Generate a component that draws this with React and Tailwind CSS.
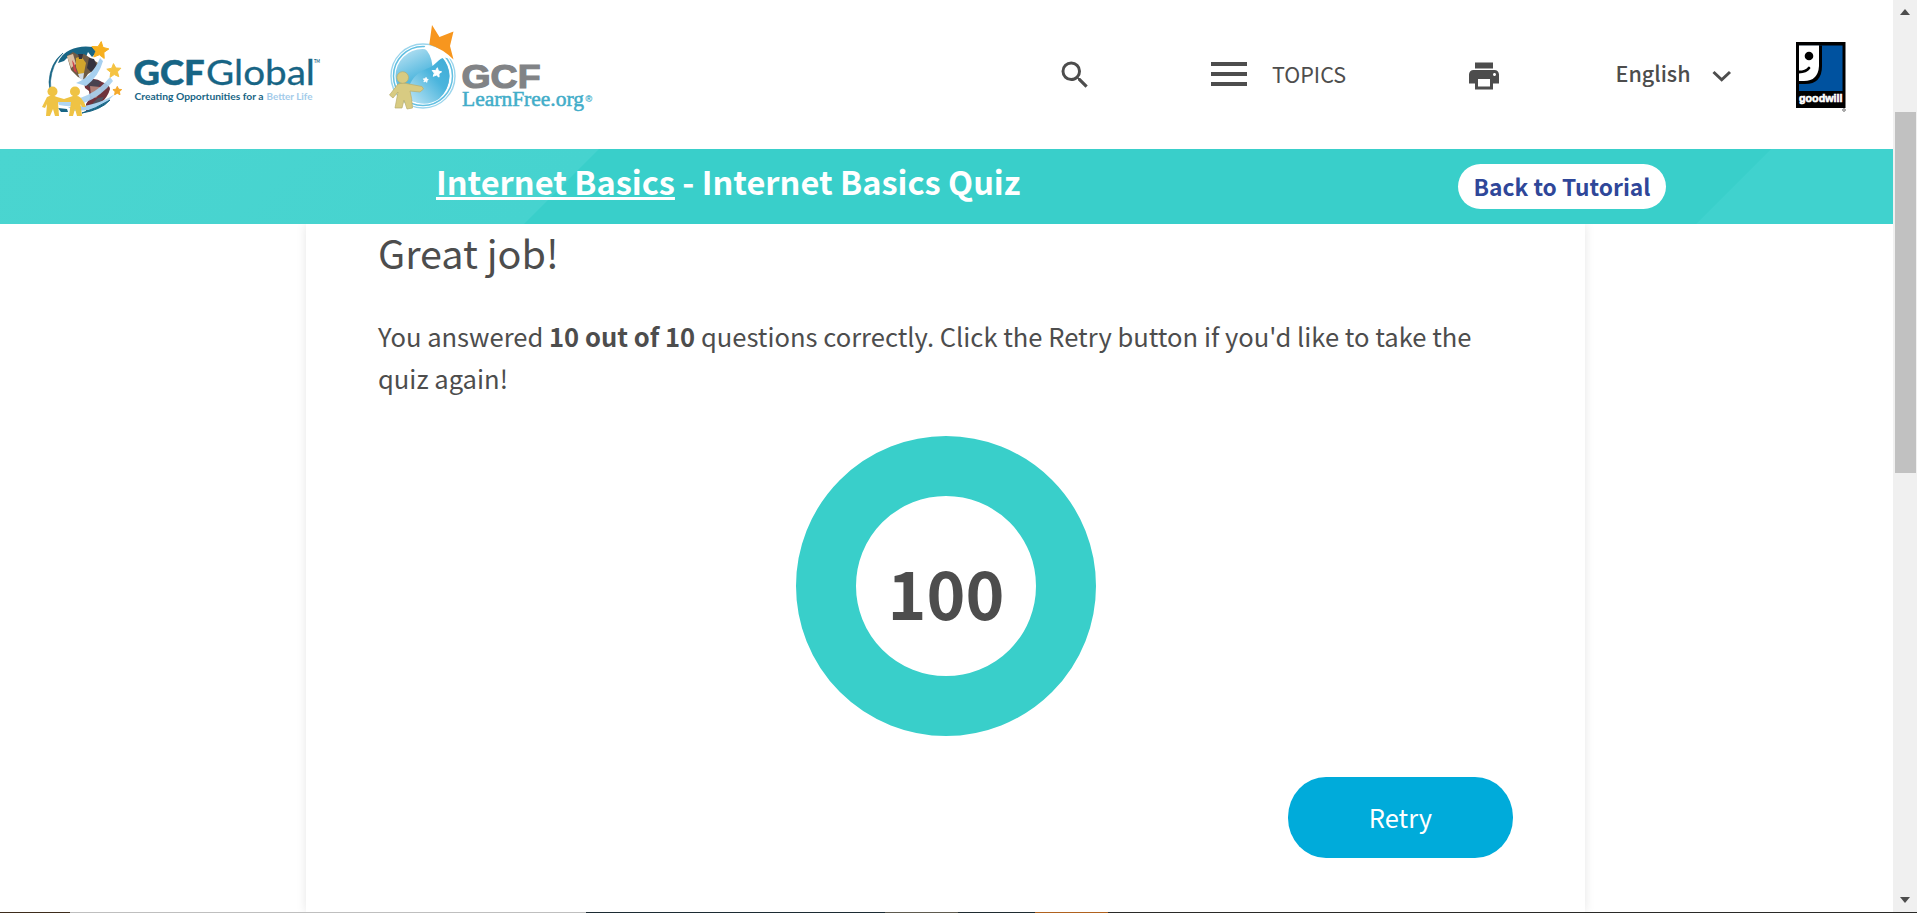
import React from "react";
import { MdSearch, MdPrint } from "react-icons/md";

const SANS = "font-['Noto_Sans_CJK_SC','Noto_Sans',sans-serif]";

function Star({ x, y, r, rot = 0, fill }) {
  const pts = Array.from({ length: 10 }, (_, i) => {
    const a = ((i * 36 - 90 + rot) * Math.PI) / 180;
    const q = i % 2 ? r * 0.48 : r;
    return `${x + q * Math.cos(a)},${y + q * Math.sin(a)}`;
  }).join(" ");
  return <polygon points={pts} fill={fill} stroke={fill} strokeWidth="1" strokeLinejoin="round" />;
}

function GlobalLogo() {
  return (
    <svg width="296" height="86" viewBox="0 0 296 86" className="shrink-0">
      <path d="M33 23 Q20 33 19 52 Q19 60 23 66 Q20 60 20.500 51 Q22 34 33 23Z" fill="#176585" stroke="#176585" strokeWidth=".6" />
      <path d="M28 33 Q31 24 40 20 Q50 15 63 17 L67 22 L62 27 L58 22 L56 27 L50 24 L45 28 L38 27 L34 31Z" fill="#176585" />
      <path d="M37 26 L43 22 L50 26 L54 24 L62 29 L68 33 L66 39 L58 44 L54 50 L48 47 L41 40Z" fill="#6f5b45" />
      <path d="M46 28 L51 26 L56 33 L54 43 L49 45 L46 37Z" fill="#d2a52c" />
      <path d="M37 26 L43 24 L46 34 L41 38Z" fill="#dcc0a4" />
      <path d="M42 30 L44 33 L47 43 L44 41Z" fill="#cf4048" />
      <path d="M48 24 L53 24 L52 29 L49 29Z M59 28 L64 29 L67 36 L61 42 L57 38Z" fill="#34333f" />
      <path d="M48 44 L54 43 L53 50 L50 49Z" fill="#d3dce5" />
      <path d="M54 52 Q64 46 72 52 Q80 55 80 59 Q78 67 70 74 Q63 80 56 82 L56 74 L60 68 L59 61 L55 58Z" fill="#70323c" />
      <path d="M54 52 Q63 47 71 52 L68 57 L60 58Z" fill="#49434f" />
      <path d="M60 56 L70 57 L71 62 L66 68 L61 66Z" fill="#b08076" />
      <path d="M68 68 L74 67 Q70 74 62 79 L58 78Z" fill="#4f5260" />
      <path d="M46 53 Q62 47 70 28 L73 31 Q69 46 56 56Z" fill="#a7d0ef" />
      <path d="M28 72 Q62 70 80 47 L83 51 Q72 66 54 73 Q42 78 29 75Z" fill="#a7d0ef" opacity=".9" />
      <path d="M38 77 Q66 77 85 64 Q74 76 60 80 L44 81Z" fill="#a7d0ef" />
      <path d="M80 70 Q71 80 52 83 Q65 79 80 70Z" fill="#176585" stroke="#176585" />
      <path d="M28 78 L37 79 L38 82 L31 82Z" fill="#176585" />
      <Star x={70} y={20.5} r={9} rot={8} fill="#f7b01f" />
      <Star x={84} y={41} r={7.4} rot={-4} fill="#f5c342" />
      <Star x={87.3} y={61} r={4.6} fill="#f5a92b" />
      <g fill="#efc344">
        <circle cx="22.5" cy="61.5" r="5" />
        <circle cx="45" cy="61.5" r="5" />
        <path d="M17 67 Q22 64 27 67 L34 69 L40 67 Q47 64 51 68 Q55 73 56 77 L52 77 L50.500 74 L52 86 L47 86 L45 79 L43 86 L39 86 L41 72 L28 72 L29 86 L25 86 L23 79 L20 86 L16 86 L17 74 L15 78 L12 77Z" />
      </g>
      <g fill="#176585">
        <text x="103.5" y="55" textLength="71" lengthAdjust="spacingAndGlyphs" stroke="#176585" strokeWidth=".5" className="font-['Lato',sans-serif] text-[35px] font-black">GCF</text>
        <text x="176" y="55" textLength="109" lengthAdjust="spacingAndGlyphs" stroke="#176585" strokeWidth=".3" className="font-['Lato',sans-serif] text-[35px]">Global</text>
        <text x="284" y="33" textLength="6" lengthAdjust="spacingAndGlyphs" className="font-['Lato',sans-serif] text-[5px] font-bold">TM</text>
        <text x="104.5" y="70" textLength="129" lengthAdjust="spacingAndGlyphs" className="font-['Lato',sans-serif] text-[9.5px] font-bold">Creating Opportunities for a</text>
      </g>
      <text x="236.5" y="70" textLength="46" lengthAdjust="spacingAndGlyphs" fill="#a3cbea" className="font-['Lato',sans-serif] text-[9.5px] font-bold">Better Life</text>
    </svg>
  );
}

function LearnFreeLogo() {
  return (
    <svg width="208" height="96" viewBox="0 0 208 96" className="shrink-0">
      <defs>
        <linearGradient id="orb" x1=".2" y1="0" x2=".7" y2="1">
          <stop offset="0" stopColor="#b5e0f2" />
          <stop offset=".5" stopColor="#55b9df" />
          <stop offset="1" stopColor="#8fd1ed" />
        </linearGradient>
        <linearGradient id="wave" x1="0" y1="1" x2="1" y2="0">
          <stop offset="0" stopColor="#c3e7f6" />
          <stop offset=".6" stopColor="#4bb5dd" />
          <stop offset="1" stopColor="#3fabd6" />
        </linearGradient>
      </defs>
      <circle cx="35" cy="56" r="32" fill="#fff" stroke="#9bd5ec" strokeWidth="1.4" />
      <circle cx="35" cy="56" r="29.500" fill="none" stroke="#63c0e2" strokeWidth="1.5" />
      <circle cx="34.500" cy="56" r="27" fill="url(#orb)" />
      <path d="M20 72 Q22 54 43 47 L54 37 Q61 46 61.500 56 Q61 70 51 79 Q37 88 23 80Z" fill="url(#wave)" />
      <path d="M38 25 L60 31 L66 41 Q56 34 49 42 L44.500 46 Q43 33 36 28Z" fill="#fff" />
      <path d="M41.300 24.500 L44 5 L51.500 17 L65.500 11.500 L62 26 L65.500 39.500 Q55 29 41.300 24.500Z" fill="#f7961e" />
      <Star x={48.700} y={52.700} r={5} rot={8} fill="#fff" />
      <Star x={37.700} y={60} r={2.600} rot={8} fill="#fff" />
      <g fill="#d8cb82" stroke="#b9ad6b" strokeWidth=".7">
        <path d="M10 64 Q15 62 21 64 L34 66.500 L35.500 69 L32 72 L22 71 Q24 78 24.500 88 L19 89 L16 80 L14 88 L7 88 L10 72 L5 78 L1.500 75Z" />
        <circle cx="14.700" cy="57.500" r="5.800" />
      </g>
      <text x="73.500" y="68" textLength="79" lengthAdjust="spacingAndGlyphs" fill="#818386" stroke="#818386" strokeWidth="1.2" className="font-['Liberation_Sans',Arial,sans-serif] text-[34px] font-bold">GCF</text>
      <text x="74" y="86" textLength="122" lengthAdjust="spacingAndGlyphs" fill="#42adc9" stroke="#42adc9" strokeWidth=".5" className="font-['Liberation_Serif','Times_New_Roman',serif] text-[20.500px]">LearnFree.org</text>
      <text x="197.500" y="82" fill="#42adc9" stroke="#42adc9" strokeWidth=".2" className="font-['Liberation_Sans',sans-serif] text-[9px]">®</text>
    </svg>
  );
}

function GoodwillLogo() {
  return (
    <svg width="51" height="70" viewBox="0 0 51 70" className="shrink-0">
      <rect width="49.500" height="66" fill="#000" />
      <rect x="3" y="3.500" width="43.500" height="45.500" fill="#00529f" />
      <path d="M3 3.500 H26 V24 Q26 42 9 42 H3Z" fill="#000" />
      <path d="M3 3.500 H23 V24 Q22 39 8 39 H3Z" fill="#fff" />
      <circle cx="13" cy="14" r="4.300" fill="#000" />
      <path d="M3 30 Q10 30 13 26" stroke="#000" strokeWidth="2.800" fill="none" strokeLinecap="round" />
      <text x="3" y="59.500" textLength="43.500" lengthAdjust="spacingAndGlyphs" fill="#fff" stroke="#fff" strokeWidth=".6" className="font-['Liberation_Sans',sans-serif] text-[10.500px] font-bold">goodwill</text>
      <circle cx="48" cy="68" r="1.300" fill="none" stroke="#555" strokeWidth=".8" />
    </svg>
  );
}

function Header() {
  return (
    <header className="flex h-[149px] shrink-0 items-start bg-white text-[#4d4d4d]">
      <div className="pt-[30px] pl-[30px]"><GlobalLogo /></div>
      <div className="ml-[62px] pt-[20px]"><LearnFreeLogo /></div>
      <MdSearch className="mt-[57px] ml-[461px] size-[36px] shrink-0" />
      <div className="mt-[62px] ml-[118px] flex w-[36px] shrink-0 flex-col gap-[6px]">
        <span className="h-[4px] bg-[#4d4d4d]" />
        <span className="h-[4px] bg-[#4d4d4d]" />
        <span className="h-[4px] bg-[#4d4d4d]" />
      </div>
      <span className="mt-[54px] ml-[25px] w-[80px] shrink-0 text-[21.500px] leading-[40px]">TOPICS</span>
      <MdPrint className="mt-[58px] ml-[114px] size-[36px] shrink-0" />
      <span className="mt-[53px] ml-[113.500px] w-[96px] shrink-0 text-[21.500px] leading-[40px] font-medium">English</span>
      <svg width="20" height="14" viewBox="0 0 20 14" className="mt-[69px] shrink-0">
        <path d="M1.500 3 L9.700 10.800 L18 3" fill="none" stroke="#4d4d4d" strokeWidth="3" />
      </svg>
      <div className="mt-[42px] ml-[64.500px]"><GoodwillLogo /></div>
    </header>
  );
}

function TitleBar() {
  return (
    <div className="flex h-[75px] shrink-0 items-start bg-[linear-gradient(135deg,#4ad5d0_0px,#46d3cf_423px,#39cfca_424px,#39cfca_1252px,#40d2ce_1253px,#40d2ce_100%)] pl-[436px]">
      <h1 className="mt-[8px] w-[1022px] text-[32.550px] leading-[48px] font-bold whitespace-nowrap text-white">
        <a className="underline decoration-[3px] underline-offset-[2px]">Internet Basics</a> - Internet Basics Quiz
      </h1>
      <button className="mt-[15px] flex h-[45px] w-[208px] items-center justify-center rounded-full bg-white text-[22.750px] leading-[41px] font-bold whitespace-nowrap text-[#2f4799]">
        Back to Tutorial
      </button>
    </div>
  );
}

function Result() {
  return (
    <main className="flex min-h-0 grow justify-center overflow-hidden bg-white pr-[2px]">
      <section className="flex w-[1279px] flex-col bg-white px-[72px] text-[#4d4d4d] shadow-[0_0_10px_rgba(0,0,0,0.1)]">
        <h2 className="text-[39.500px] leading-[56px]">Great job!</h2>
        <p className="mt-[35px] h-[84px] text-[25.570px] leading-[42px] whitespace-nowrap">
          You answered <b>10 out of 10</b> questions correctly. Click the Retry button if you'd like to take the
          <br />
          quiz again!
        </p>
        <div className="mt-[37px] flex size-[300px] items-center justify-center self-center rounded-full border-[60px] border-[#39cfca]">
          <span className="mt-[10px] pl-px text-[66px] leading-[96px] font-bold">100</span>
        </div>
        <button className="mt-[41px] flex h-[81px] w-[225px] items-center justify-center self-end rounded-[38px/40px] bg-[#00abda] pb-[2px] text-[25.500px] leading-[42px] text-white">
          Retry
        </button>
      </section>
    </main>
  );
}

function Scrollbar() {
  return (
    <div className="flex w-[24px] shrink-0 flex-col items-center bg-[#f0f0f0]">
      <svg width="10" height="6" viewBox="0 0 10 6" className="mt-[9px] shrink-0"><path d="M0 6 L5 0 L10 6Z" fill="#4d4d4d" /></svg>
      <div className="mt-[97px] h-[361px] w-[21px] shrink-0 bg-[#c1c1c1]" />
      <div className="grow" />
      <svg width="10" height="6" viewBox="0 0 10 6" className="mb-[9px] shrink-0"><path d="M0 0 L5 6 L10 0Z" fill="#4d4d4d" /></svg>
    </div>
  );
}

export default function App() {
  return (
    <div className={`flex h-[913px] w-[1917px] flex-col overflow-hidden bg-white ${SANS}`}>
      <div className="flex h-[912px]">
        <div className="flex w-[1893px] shrink-0 flex-col">
          <Header />
          <TitleBar />
          <Result />
        </div>
        <Scrollbar />
      </div>
      <div className="flex h-px">
        <span className="w-[70px] bg-[#3d2c1c]" />
        <span className="w-[516px] bg-[#bfbfbf]" />
        <span className="w-[299px] bg-[#1c2b33]" />
        <span className="w-[73px] bg-[#5f5b50]" />
        <span className="w-[77px] bg-[#1f2b30]" />
        <span className="w-[73px] bg-[#b0621f]" />
        <span className="grow bg-[#2a2a28]" />
      </div>
    </div>
  );
}
